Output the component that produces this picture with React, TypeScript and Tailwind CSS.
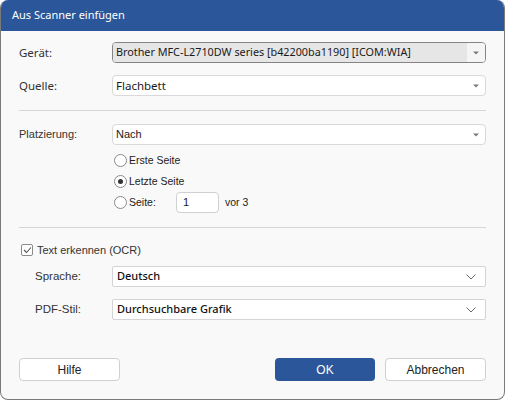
import React from "react"

const segoe = { fontFamily: '"Noto Sans", "Open Sans", sans-serif' }
const arial = { fontFamily: '"Liberation Sans", Arial, sans-serif' }

function Triangle() {
    return (
        <svg width="6" height="4" viewBox="0 0 6 4" className="shrink-0">
            <path d="M0 0.5 L6 0.5 L3 3.5 Z" fill="#7a7a7a" />
        </svg>
    )
}

function Chevron() {
    return (
        <svg width="10" height="6" viewBox="0 0 10 6" className="shrink-0">
            <path d="M0.5 0.5 L5 5 L9.5 0.5" fill="none" stroke="#6a6a6a" strokeWidth="1" />
        </svg>
    )
}

function Radio({ checked, label }: { checked?: boolean; label: string }) {
    return (
        <div className="flex items-center gap-[2px] h-[21px]">
            <span className="w-[13px] h-[13px] rounded-full border border-[#8a8a8a] bg-white flex items-center justify-center">
                {checked && <span className="w-[5px] h-[5px] rounded-full bg-[#333]" />}
            </span>
            <span className="text-[10.5px] text-[#222]" style={arial}>{label}</span>
        </div>
    )
}

export default function App() {
    return (
        <div className="w-[505px] h-[400px] bg-white">
            <div className="w-full h-full flex flex-col rounded-[8px] overflow-hidden border border-[#7a7a7a] border-t-0 bg-[#f9f9f9]">

                {/* TITLE */}
                <div className="h-[31px] shrink-0 bg-[#2b579a] flex items-center px-[11px]">
                    <span className="text-white text-[11px]" style={segoe}>Aus Scanner einfügen</span>
                </div>

                <div className="flex flex-col px-[18px]">

                    {/* GERÄT */}
                    <div className="flex items-center mt-[11px] h-[21px]">
                        <span className="w-[93px] text-[11.5px] text-[#333]" style={segoe}>Gerät:</span>
                        <div className="flex-1 h-[21px] flex rounded-[4px] border border-[#858585] overflow-hidden">
                            <div className="flex-1 bg-[#e6e6e6] flex items-center pl-[3px]">
                                <span className="text-[10.8px] text-[#1a1a1a] whitespace-nowrap" style={segoe}>
                                    Brother MFC-L2710DW series [b42200ba1190] [ICOM:WIA]
                                </span>
                            </div>
                            <div className="w-[18px] bg-[#f5f5f5] flex items-center justify-center">
                                <Triangle />
                            </div>
                        </div>
                    </div>

                    {/* QUELLE */}
                    <div className="flex items-center mt-[12px] h-[21px]">
                        <span className="w-[93px] text-[11.5px] text-[#333]" style={segoe}>Quelle:</span>
                        <div className="flex-1 h-[21px] flex items-center rounded-[4px] border border-[#d9d9d9] bg-white pl-[3px] pr-[6px]">
                            <span className="flex-1 text-[11.5px] text-[#1a1a1a]" style={segoe}>Flachbett</span>
                            <Triangle />
                        </div>
                    </div>

                    <div className="h-px bg-[#d6d6d6] mt-[14px]" />

                    {/* PLATZIERUNG */}
                    <div className="flex items-center mt-[13px] h-[21px]">
                        <span className="w-[93px] text-[11px] text-[#333]" style={arial}>Platzierung:</span>
                        <div className="flex-1 h-[21px] flex items-center rounded-[4px] border border-[#d9d9d9] bg-white pl-[3px] pr-[6px]">
                            <span className="flex-1 text-[11px] text-[#1a1a1a]" style={arial}>Nach</span>
                            <Triangle />
                        </div>
                    </div>

                    <div className="flex flex-col ml-[95px] mt-[5px]">
                        <Radio label="Erste Seite" />
                        <Radio checked label="Letzte Seite" />
                        <div className="flex items-center">
                            <div className="w-[62px]">
                                <Radio label="Seite:" />
                            </div>
                            <div className="w-[43px] h-[21px] rounded-[4px] border border-[#d0d0d0] bg-white flex items-center pl-[6px]">
                                <span className="text-[11px] text-[#1a1a1a]" style={arial}>1</span>
                            </div>
                            <span className="ml-[6px] text-[10.5px] text-[#222]" style={arial}>vor 3</span>
                        </div>
                    </div>

                    <div className="h-px bg-[#d6d6d6] mt-[14px]" />

                    {/* OCR */}
                    <div className="flex items-center gap-[4px] mt-[15px] ml-[2px] h-[14px]">
                        <span className="w-[12px] h-[12px] rounded-[2px] border border-[#8a8a8a] bg-white flex items-center justify-center">
                            <svg width="9" height="8" viewBox="0 0 9 8">
                                <path d="M1 4 L3.5 6.5 L8 1.5" fill="none" stroke="#555" strokeWidth="1.1" />
                            </svg>
                        </span>
                        <span className="text-[11px] text-[#333]" style={arial}>Text erkennen (OCR)</span>
                    </div>

                    {/* SPRACHE */}
                    <div className="flex items-center mt-[9px] h-[21px]">
                        <span className="w-[93px] pl-[16px] text-[11.5px] text-[#333]" style={arial}>Sprache:</span>
                        <div className="flex-1 h-[21px] flex items-center rounded-[2px] border border-[#d4d4d4] bg-white pl-[4px] pr-[9px]">
                            <span className="flex-1 text-[11px] font-medium text-[#111]" style={segoe}>Deutsch</span>
                            <Chevron />
                        </div>
                    </div>

                    {/* PDF-STIL */}
                    <div className="flex items-center mt-[12px] h-[21px]">
                        <span className="w-[93px] pl-[16px] text-[11.5px] text-[#333]" style={arial}>PDF-Stil:</span>
                        <div className="flex-1 h-[21px] flex items-center rounded-[2px] border border-[#d4d4d4] bg-white pl-[4px] pr-[9px]">
                            <span className="flex-1 text-[11px] font-medium text-[#111]" style={segoe}>Durchsuchbare Grafik</span>
                            <Chevron />
                        </div>
                    </div>
                </div>

                {/* BUTTONS */}
                <div className="flex items-center px-[18px] mt-auto mb-[18px]">
                    <button className="w-[101px] h-[23px] rounded-[4px] border border-[#d0d0d0] bg-white text-[12px] text-[#222]" style={arial}>
                        Hilfe
                    </button>
                    <div className="flex-1" />
                    <button className="w-[100px] h-[23px] rounded-[4px] bg-[#2b579a] text-[12px] text-white" style={arial}>
                        OK
                    </button>
                    <button className="ml-[10px] w-[101px] h-[23px] rounded-[4px] border border-[#d0d0d0] bg-white text-[12px] text-[#222]" style={arial}>
                        Abbrechen
                    </button>
                </div>
            </div>
        </div>
    )
}
